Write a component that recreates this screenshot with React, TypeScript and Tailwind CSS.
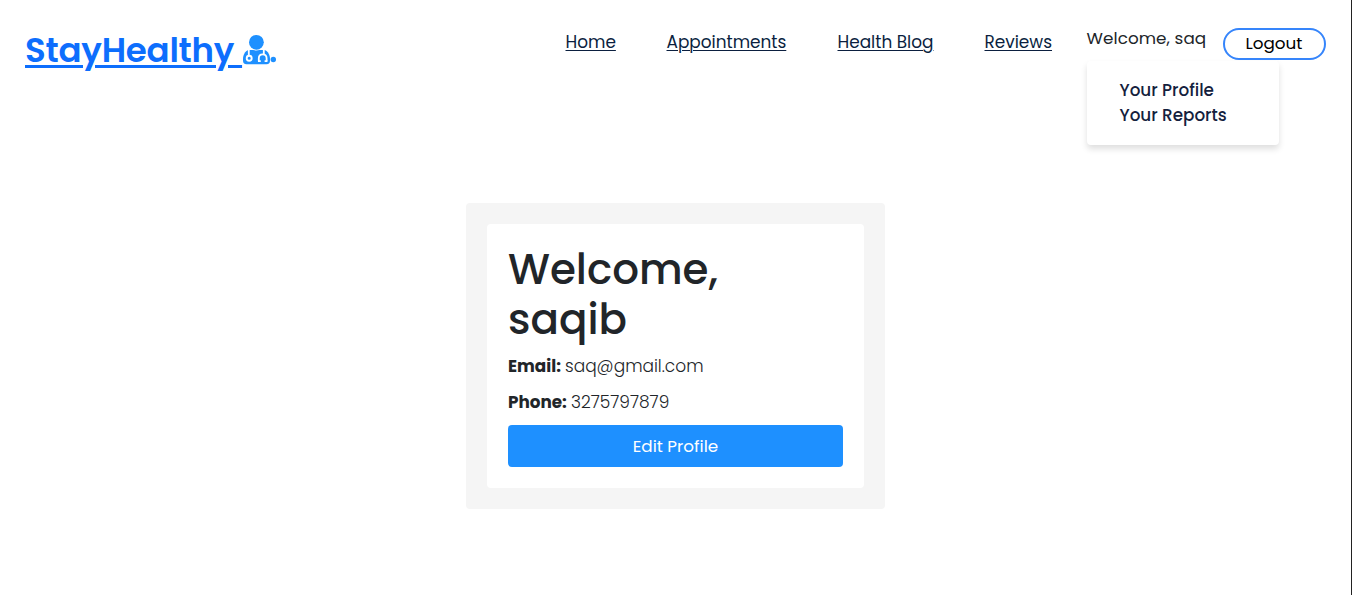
import React from "react";

const navLinks = [
  { label: "Home", className: "w-[50px]" },
  { label: "Appointments", className: "ml-[51px] w-[120px]" },
  { label: "Health Blog", className: "ml-[51px] w-[96px]" },
  { label: "Reviews", className: "ml-[51px] w-[68px]" },
];

function DoctorIcon() {
  return (
    <svg className="h-[32px] w-[35px] shrink-0" viewBox="0 0 35 32" fill="none">
      <path
        d="M6.500 16 H22.500 C26 17 28 21 28 25 V26.500 Q28 30.300 24.500 30.300 H4.500 Q1 30.300 1 26.500 V25 C1 21 3 17 6.500 16 Z"
        fill="#1e90ff"
      />
      <circle cx="14.400" cy="8.300" r="8.300" fill="#fff" />
      <circle cx="14.400" cy="8.300" r="7.400" fill="#1e90ff" />
      <path
        d="M6.800 15.500 V21.500 M21.800 15.500 V20 M16.800 27.300 V24.500 Q16.800 20.300 20.700 20.300 Q24.600 20.300 24.600 24.500 V27.300"
        stroke="#fff"
        strokeWidth="1.800"
      />
      <path d="M16 27.200 H18.800 M22.600 27.200 H25.400" stroke="#fff" strokeWidth="1.800" />
      <circle cx="7.200" cy="24.300" r="2.500" stroke="#fff" strokeWidth="1.900" />
      <circle cx="31.300" cy="25.500" r="2.700" fill="#1e90ff" />
    </svg>
  );
}

export default function App() {
  return (
    <div className="h-[595px] w-full overflow-hidden border-r border-[#222] bg-white font-[Poppins,Inter,sans-serif] text-[16.8px] text-[#212529]">
      <header className="flex h-[203px] items-start whitespace-nowrap pl-[25px]">
        <a className="mt-[25px] flex h-[50px] w-[252px] shrink-0 items-start text-[#0d6efd]">
          <span className="w-[217px] shrink-0 whitespace-pre text-[34px] leading-[50px] font-semibold tracking-[-0.22px] underline decoration-[3px] underline-offset-[3px]">
            {"StayHealthy "}
          </span>
          <span className="mt-[9px]">
            <DoctorIcon />
          </span>
        </a>
        <nav className="mt-[30px] ml-[288.5px] flex text-[16.9px] leading-6 text-[#0b1f3f]">
          {navLinks.map((link) => (
            <a
              key={link.label}
              className={`${link.className} underline decoration-1 underline-offset-[2px]`}
            >
              {link.label}
            </a>
          ))}
        </nav>
        <div className="mt-[26px] ml-[34px] w-[136px]">
          <div className="leading-6 tracking-[0.08px]">Welcome, saq</div>
          <ul className="mt-[11px] h-[84px] w-[192px] rounded-[4px] bg-white pt-[17px] pl-[33px] leading-[25px] font-medium text-[#14213d] shadow-[0_4px_6px_rgba(0,0,0,0.13)]">
            <li>Your Profile</li>
            <li>Your Reports</li>
          </ul>
        </div>
        <button className="relative mt-[28px] h-[32px] w-[103px] rounded-full border-2 border-[#3685fb] bg-white pb-[2px] leading-[26px] text-black">
          Logout
        </button>
      </header>
      <main className="ml-[466px] h-[306px] w-[419px] rounded-[4px] bg-[#f5f5f5] p-[21px]">
        <section className="h-[264px] rounded-[4px] bg-white px-[21px] pt-[21px]">
          <h1 className="text-[42px] leading-[50px] font-medium">
            Welcome,
            <br />
            saqib
          </h1>
          <p className="mt-[9px] flex text-[17px] leading-6 font-light">
            <strong className="w-[57px] text-[16.8px] font-bold">Email:</strong>
            <span>saq@gmail.com</span>
          </p>
          <p className="mt-[12px] flex text-[17px] leading-6 font-light">
            <strong className="w-[63px] text-[16.8px] font-bold">Phone:</strong>
            <span>3275797879</span>
          </p>
          <button className="mt-[11px] h-[42px] w-full rounded-[4px] bg-[#1e90ff] pt-[2px] text-white">
            Edit Profile
          </button>
        </section>
      </main>
    </div>
  );
}
